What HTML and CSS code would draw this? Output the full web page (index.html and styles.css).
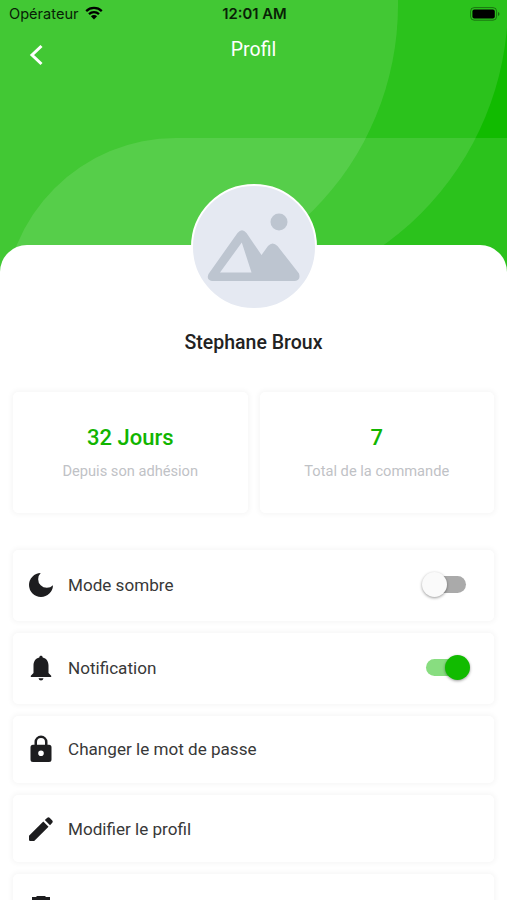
FILE: index.html
```html
<!DOCTYPE html>
<html lang="fr">
<head>
<meta charset="utf-8">
<title>Profil</title>
<link rel="stylesheet" href="styles.css">
</head>
<body>
<div class="screen">
  <header class="hero">
    <svg class="hero-art" viewBox="0 0 507 280" aria-hidden="true">
      <path d="M-10-10H508V3A298 298 0 0 1 210 301H-10Z"/>
      <path d="M-10-10H398V5A291 291 0 0 1 107 296H-10Z"/>
      <path d="M4 310A172 172 0 0 1 176 138H507V310Z"/>
    </svg>
    <div class="status-bar">
      <div class="carrier">
        <span>Opérateur</span>
        <svg class="wifi" viewBox="0 0 18 14">
          <path d="M1.2 5.1a11.2 11.2 0 0 1 15.6 0M4 8.1a7.2 7.2 0 0 1 10 0" fill="none" stroke="currentColor" stroke-width="2.3"/>
          <path d="M9 13.5 5.9 10.3a4.4 4.4 0 0 1 6.2 0Z"/>
        </svg>
      </div>
      <span class="clock">12:01 AM</span>
      <svg class="battery" viewBox="0 0 30 14">
        <rect x=".6" y=".6" width="26" height="12.6" rx="3.6" fill="none" stroke="#000" stroke-opacity=".4"/>
        <rect x="2.4" y="2.4" width="22.4" height="9" rx="2"/>
        <path d="M28 5v4q1.5-.6 1.5-2T28 5Z" opacity=".45"/>
      </svg>
    </div>
    <nav class="title-bar">
      <svg class="back" viewBox="0 0 14 22"><path d="M12.500 2 3 11l9.500 9" fill="none" stroke="#fff" stroke-width="3"/></svg>
      <h1>Profil</h1>
    </nav>
  </header>
  <main class="sheet">
    <div class="avatar">
      <svg viewBox="0 0 122 122">
        <circle cx="86" cy="36" r="8.5"/>
        <path fill-rule="evenodd" d="M44.5 47Q49 41.500 53.500 47L68.500 69 75 60Q79.500 55 84.500 60L106 87.500Q108 94.500 102 95H19Q13 94 15.500 88ZM48.800 56.500 27 86.500H58.500Z"/>
      </svg>
    </div>
    <h2>Stephane Broux</h2>
    <section class="stats">
      <div class="card stat"><strong>32 Jours</strong><span>Depuis son adhésion</span></div>
      <div class="card stat"><strong>7</strong><span>Total de la commande</span></div>
    </section>
    <section class="settings">
      <div class="card row tall">
        <svg class="icon" viewBox="0 0 24 24"><path d="M11.700 0A12 12 0 1 0 24 12.300A7.600 7.600 0 0 1 11.700 0Z"/></svg>
        <span>Mode sombre</span>
        <div class="switch"></div>
      </div>
      <div class="card row tall">
        <svg class="icon" viewBox="0 0 24 24"><path d="M10.300 1.500C10.200-.8 13.800-.8 13.700 1.500C17.500 2.300 19.500 5.400 19.500 9.500V17L22.200 19.700V20.900H1.800V19.700L4.500 17V9.500C4.500 5.400 6.500 2.300 10.300 1.500ZM9.500 22.300H14.500Q14 24.600 12 24.600T9.500 22.300Z"/></svg>
        <span>Notification</span>
        <div class="switch on"></div>
      </div>
      <div class="card row lift">
        <svg class="icon lock" viewBox="0 0 24 28"><path fill-rule="evenodd" d="M5.500 9.700V7A6.500 6.500 0 0 1 18.500 7V9.700H20Q22.500 9.700 22.500 12.200V24.500Q22.500 27 20 27H4Q1.500 27 1.500 24.500V12.200Q1.500 9.700 4 9.700ZM8 9.700H16V7A4 4 0 0 0 8 7ZM12 15.500A2.800 2.800 0 1 0 12 21.100A2.800 2.800 0 1 0 12 15.500Z"/></svg>
        <span>Changer le mot de passe</span>
      </div>
      <div class="card row">
        <svg class="icon" viewBox="0 0 24 24"><path d="M0 18.800 14.300 4.500 19.500 9.700 5.200 24H1.200Q0 24 0 22.800ZM15.800 3 18.300.7Q19.500-.3 20.600.7L23.300 3.400Q24.300 4.500 23.300 5.700L21 8.200Z"/></svg>
        <span>Modifier le profil</span>
      </div>
      <div class="card row">
        <svg class="icon" viewBox="0 0 24 24"><path d="M8 0H16L17 1H21V4H3V1H7ZM4 5H20V21Q20 24 17 24H7Q4 24 4 21Z"/></svg>
      </div>
    </section>
  </main>
</div>
</body>
</html>
```
FILE: styles.css
```css
* { box-sizing: border-box; }
body { margin: 0; background: #fff; font-family: Roboto, sans-serif; }
h1, h2 { margin: 0; }
.screen { width: 507px; height: 900px; overflow: hidden; }
.hero { position: relative; height: 280px; background: #11bb00; overflow: hidden; }
.hero-art { position: absolute; inset: 0; width: 507px; height: 280px; fill: #fff; fill-opacity: .108; }
.status-bar { position: relative; display: grid; grid-template-columns: 1fr auto 1fr; align-items: center; height: 28px; padding: 0 7px 0 9px; font-family: Inter, sans-serif; font-size: 14.6px; color: #082106; }
.carrier { display: flex; align-items: center; gap: 6px; margin-top: -1px; }
.wifi { width: 18px; height: 14px; margin-top: -1px; fill: currentColor; color: #000; }
.clock { font-weight: 600; font-size: 14.8px; }
.battery { width: 30px; height: 14px; margin-top: -1px; justify-self: end; }
.title-bar { position: relative; display: grid; grid-template-columns: 1fr auto 1fr; align-items: start; padding: 8px 29px 0; color: #fff; }
.title-bar h1 { margin-top: 1px; font-size: 19.5px; line-height: 26px; font-weight: 400; }
.back { width: 14px; height: 22px; margin-top: 8px; }
.sheet { display: flow-root; position: relative; height: 655px; margin-top: -35px; padding: 0 11px; border-radius: 27px 27px 0 0; background: #fff; }
.avatar { width: 126px; height: 126px; margin: -61px auto 0; border: 2px solid #fff; border-radius: 50%; background: #e5e9f2; }
.avatar svg { display: block; width: 122px; height: 122px; fill: #bdc5d0; }
h2 { margin-top: 20px; text-align: center; font-size: 19.5px; line-height: 26px; font-weight: 500; color: #222; }
.stats { display: grid; grid-template-columns: 1fr 1fr; gap: 12px; margin: 36px 2px 0; }
.card { border-radius: 5px; background: #fff; box-shadow: 0 0 5px 2px rgba(0,0,0,.035); }
.stat { display: flex; flex-direction: column; align-items: center; height: 121px; padding-top: 32px; }
.stat strong { font-size: 22px; line-height: 28px; font-weight: 500; color: #11b500; }
.stat span { margin-top: 9px; font-size: 14.65px; line-height: 20px; color: #bfc2c6; }
.settings { display: grid; gap: 12px; margin: 37px 2px 0; }
.row { display: flex; align-items: center; height: 67px; padding: 0 28px 0 16px; font-size: 17.1px; color: #383838; }
.row.tall { height: 71px; padding-bottom: 2px; }
.row.lift { padding-bottom: 2px; }
.icon { width: 24px; height: 24px; margin-right: 15px; fill: #1d1d1f; overflow: visible; }
.lock { height: 28px; }
.switch { position: relative; width: 40px; height: 17px; margin-left: auto; border-radius: 9px; background: #aaa; }
.switch::before { content: ""; position: absolute; top: -4px; left: -4px; width: 25px; height: 25px; border-radius: 50%; background: #fafafa; box-shadow: 0 1px 3px rgba(0,0,0,.4); }
.switch.on { background: #88dd80; }
.switch.on::before { left: 19px; background: #11bb00; }
```
